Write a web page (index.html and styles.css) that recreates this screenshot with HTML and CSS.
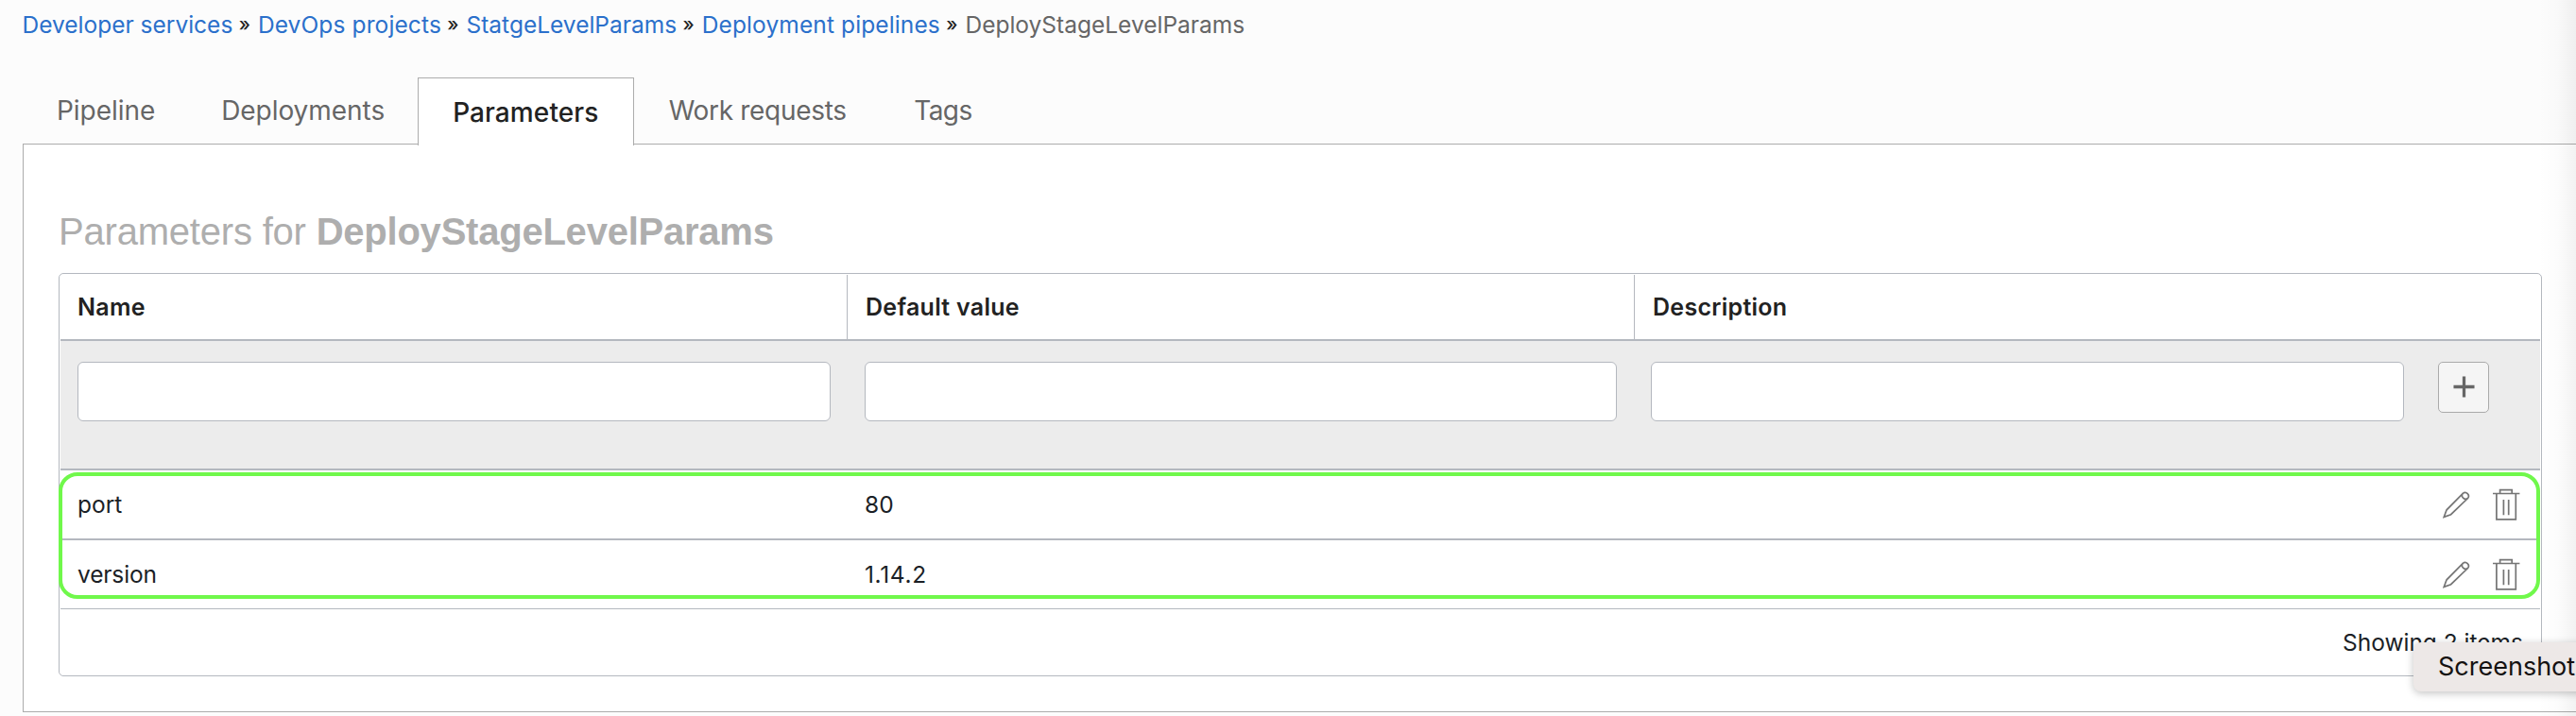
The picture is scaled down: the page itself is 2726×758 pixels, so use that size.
FILE: index.html
```
<!DOCTYPE html>
<html lang="en">
<head>
<meta charset="utf-8">
<title>Deployment pipeline parameters</title>
<link rel="stylesheet" href="styles.css">
</head>
<body>
<svg class="sprite" aria-hidden="true">
  <symbol id="pencil" viewBox="0 0 30 34">
    <path d="M1.3 30.3 4.1 22.8 21.3 5.3A3.7 3.7 0 0 1 26.5 10.5L8.6 27.7Z M21.3 5.3A3.7 3.7 0 0 0 26.5 10.5"/>
  </symbol>
  <symbol id="trash" viewBox="0 0 30 34">
    <path d="M1 5.5H29.4 M8.6 5V1.6H21.2V5 M4.9 5.5V32.9H25.3V5.5 M12.4 12V28.2 M17.7 12V28.2"/>
  </symbol>
</svg>

<nav class="breadcrumb">
  <a class="crumb" href="#">Developer services</a><span class="sep">»</span>
  <a class="crumb spaced" href="#">DevOps projects</a><span class="sep">»</span>
  <a class="crumb" href="#">StatgeLevelParams</a><span class="sep">»</span>
  <a class="crumb spaced" href="#">Deployment pipelines</a><span class="sep">»</span>
  <span class="crumb current">DeployStageLevelParams</span>
</nav>

<div class="tabs">
  <a class="tab first">Pipeline</a>
  <a class="tab">Deployments</a>
  <a class="tab active">Parameters</a>
  <a class="tab work">Work requests</a>
  <a class="tab tags">Tags</a>
</div>

<main class="panel">
  <h1 class="title">Parameters for <b>DeployStageLevelParams</b></h1>
  <section class="table">
    <div class="row head">
      <div class="cell">Name</div>
      <div class="cell">Default value</div>
      <div class="cell">Description</div>
    </div>
    <div class="filters">
      <input class="field" type="text" aria-label="Name">
      <input class="field" type="text" aria-label="Default value">
      <input class="field" type="text" aria-label="Description">
      <button class="add" aria-label="Add"><svg class="plus" viewBox="0 0 24 24"><path d="M.5 12H23.5M12 .5V23.5"/></svg></button>
    </div>
    <div class="rows">
      <div class="row item">
        <div class="cell">port</div>
        <div class="cell">80</div>
        <div class="actions"><svg class="icon"><use href="#pencil"/></svg><svg class="icon"><use href="#trash"/></svg></div>
      </div>
      <div class="row item">
        <div class="cell version">version</div>
        <div class="cell number">1.14.2</div>
        <div class="actions"><svg class="icon"><use href="#pencil"/></svg><svg class="icon"><use href="#trash"/></svg></div>
      </div>
      <div class="highlight"></div>
    </div>
    <div class="footer">Showing 2 items</div>
  </section>
</main>
<div class="edge"></div>
<div class="tooltip">Screenshot</div>
</body>
</html>
```
FILE: styles.css
```
* { box-sizing: border-box; }
body {
  margin: 0;
  height: 758px;
  position: relative;
  overflow: hidden;
  background: #fcfcfc;
  font-family: Inter, sans-serif;
  font-size: 24.5px;
  color: #1b1f26;
}
.sprite { display: none; }

.breadcrumb {
  display: flex;
  align-items: center;
  height: 52px;
  padding-left: 23.5px;
}
.crumb {
  color: #2b70cb;
  text-decoration: none;
  white-space: nowrap;
}
.crumb.spaced { letter-spacing: .12px; }
.crumb.current { color: #666; }
.sep {
  margin: 0 8px 0 6.4px;
  font-size: 20px;
  font-weight: 500;
  line-height: 22px;
  color: #222;
}

.tabs {
  display: flex;
  height: 100px;
  padding: 30px 0 0 24px;
}
.tab {
  height: 70px;
  padding: 0 35px;
  font-size: 28px;
  line-height: 70px;
  letter-spacing: -.05px;
  color: #666;
  white-space: nowrap;
}
.tab.first { padding-left: 36px; }
.tab.active {
  position: relative;
  height: 72px;
  width: 229px;
  padding: 2px 0 0 36px;
  border: 1px solid #acacac;
  border-bottom: 0;
  background: #fff;
  font-weight: 500;
  letter-spacing: .1px;
  line-height: 68px;
  color: #222;
}
.tab.work { padding-left: 36.5px; padding-right: 36.5px; letter-spacing: -.3px; }
.tab.tags { letter-spacing: -.6px; }

.panel {
  height: 602px;
  margin-left: 24px;
  padding: 69px 36px 0 37px;
  border: solid #acacac;
  border-width: 1px 0 1px 1px;
  background: #fff;
}
.title {
  height: 67px;
  margin: 0;
  font: 400 40px/46px "Liberation Sans", sans-serif;
  letter-spacing: -.2px;
  color: #aeaeae;
}
.title b { letter-spacing: -.23px; }

.table {
  height: 427px;
  padding: 1px;
  border: 1px solid #b4b8bf;
  border-radius: 5px;
}
.row {
  display: grid;
  grid-template-columns: 833px 833px 1fr;
}
.cell { padding-left: 18px; }
.head {
  height: 70px;
  border-bottom: 2px solid #b4b8bf;
  font-size: 25px;
  font-weight: 600;
  line-height: 69px;
  letter-spacing: .28px;
  color: #222;
}
.head .cell + .cell { height: 68px; padding-left: 19px; box-shadow: -1px 0 #b4b8bf; }
.filters {
  display: grid;
  grid-template-columns: 797px 796px 797px 54px;
  column-gap: 36px;
  height: 137px;
  padding: 22px 18px;
  border-bottom: 2px solid #b4b8bf;
  background: #ececec;
}
.field {
  width: 100%;
  height: 63px;
  border: 1px solid #b4b8bf;
  border-radius: 6px;
  background: #fff;
}
.add {
  display: flex;
  align-items: center;
  justify-content: center;
  width: 54px;
  height: 54px;
  padding: 0 0 2px;
  border: 1px solid #aaa;
  border-radius: 5px;
  background: #f5f5f5;
}
.plus { width: 23px; height: 23px; fill: none; stroke: #666; stroke-width: 3.4; }

.rows { position: relative; }
.item {
  height: 74px;
  border-bottom: 2px solid #b4b8bf;
  line-height: 72px;
}
.item:nth-child(2) { height: 73px; border-bottom-width: 1px; }
.version { letter-spacing: -.15px; }
.number { letter-spacing: .65px; }
.actions {
  display: flex;
  justify-content: flex-end;
  padding: 19px 21px 0 0;
  gap: 22px;
}
.icon { width: 30px; height: 34px; fill: none; stroke: #757575; stroke-width: 1.7; }
.highlight {
  position: absolute;
  left: -2px;
  right: 0;
  top: 2px;
  height: 134px;
  border: 4px solid #70f84b;
  border-radius: 20px;
}
.footer {
  padding-right: 18px;
  line-height: 71px;
  text-align: right;
}

.edge {
  position: absolute;
  top: 0;
  right: 0;
  width: 40px;
  height: 758px;
  background: linear-gradient(to right, rgba(0, 0, 0, 0), rgba(0, 0, 0, .012) 50%, rgba(0, 0, 0, .05));
}
.tooltip {
  position: absolute;
  left: 2554px;
  top: 680px;
  width: 200px;
  height: 52px;
  padding-left: 26px;
  border-radius: 8px;
  background: #ede8e7;
  box-shadow: 0 2px 8px rgba(0, 0, 0, .24);
  font-size: 27px;
  line-height: 51px;
  color: #151212;
}
```
